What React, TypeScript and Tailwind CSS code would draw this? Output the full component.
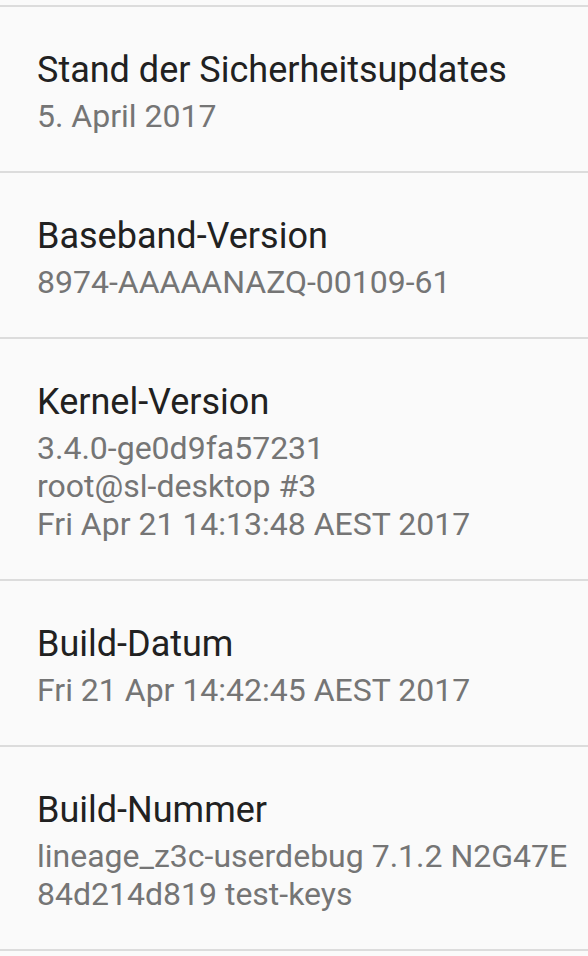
const items: { title: string; lines: string[] }[] = [
  { title: "Stand der Sicherheitsupdates", lines: ["5. April 2017"] },
  { title: "Baseband-Version", lines: ["8974-AAAAANAZQ-00109-61"] },
  {
    title: "Kernel-Version",
    lines: ["3.4.0-ge0d9fa57231", "root@sl-desktop #3", "Fri Apr 21 14:13:48 AEST 2017"],
  },
  { title: "Build-Datum", lines: ["Fri 21 Apr 14:42:45 AEST 2017"] },
  { title: "Build-Nummer", lines: ["lineage_z3c-userdebug 7.1.2 N2G47E", "84d214d819 test-keys"] },
];

export default function App() {
  return (
    <div className="w-[588px] h-[956px] overflow-hidden bg-[#fafafa] font-['Roboto',sans-serif]">
      <div className="h-[5px]" />
      {items.map((item) => (
        <div key={item.title} className="border-t-2 border-[#dcdcdc] pl-[37px] pt-[41px] pb-[36px]">
          <div className="text-[36px] leading-[44px] text-[#212121] mb-[5px]">{item.title}</div>
          {item.lines.map((line) => (
            <div key={line} className="text-[32px] leading-[38px] text-[#757575]">
              {line}
            </div>
          ))}
        </div>
      ))}
      <div className="border-t-2 border-[#dcdcdc]" />
    </div>
  );
}
